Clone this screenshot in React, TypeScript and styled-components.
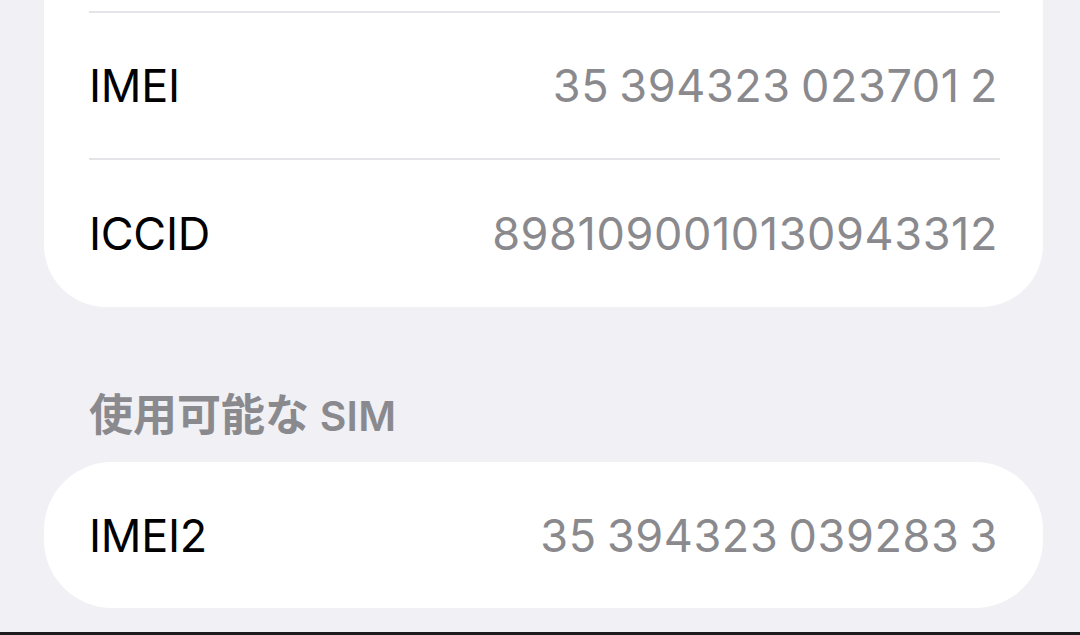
import styled, { createGlobalStyle } from "styled-components";

type InfoRowProps = {
  label?: string;
  value?: string;
  divider?: boolean;
  height?: number;
};

const GlobalStyle = createGlobalStyle`
  html, body {
    margin: 0;
    padding: 0;
    background-color: #f0f0f5;
  }
  body {
    font-family: Inter, "Noto Sans CJK JP", sans-serif;
    -webkit-font-smoothing: antialiased;
  }
`;

const Screen = styled.div`
  width: 1080px;
  height: 635px;
  overflow: hidden;
  box-sizing: border-box;
  border-bottom: 3px solid #1c1c1e;
  background-color: #f0f0f5;
`;

const Content = styled.div`
  display: flex;
  flex-direction: column;
  margin-top: -60px;
  padding: 0 37px 0 44px;
`;

const Card = styled.div<{ $radius?: number }>`
  display: flex;
  flex-direction: column;
  background-color: #ffffff;
  border-radius: ${({ $radius }) => $radius ?? 62}px;
  overflow: hidden;
`;

const Row = styled.div<{ $height: number }>`
  height: ${({ $height }) => $height}px;
  padding: 0 45px;
`;

const RowInner = styled.div<{ $divider: boolean }>`
  height: 100%;
  box-sizing: border-box;
  display: flex;
  flex-direction: row;
  align-items: center;
  justify-content: space-between;
  border-top: ${({ $divider }) => ($divider ? "2px solid #e4e4e9" : "none")};
  margin-right: -2px;
`;

const Label = styled.span`
  font-size: 45px;
  color: #000000;
  letter-spacing: -0.3px;
`;

const Value = styled.span`
  font-size: 45px;
  color: #8a8a8e;
  letter-spacing: 0.6px;
  word-spacing: -3px;
  margin-right: 2px;
`;

const SectionHeader = styled.div`
  font-family: Inter, "Noto Sans CJK JP", sans-serif;
  font-size: 44px;
  font-weight: 600;
  color: #8a8a8e;
  padding: 88px 0 0 45px;
  height: 67px;
  line-height: 40px;
`;

const HeaderLatin = styled.span`
  font-size: 41px;
  letter-spacing: 0.3px;
`;

const InfoRow = ({ label, value, divider = true, height = 147 }: InfoRowProps) => {
  return (
    <Row $height={height}>
      <RowInner $divider={divider}>
        {label ? <Label>{label}</Label> : null}
        {value ? <Value>{value}</Value> : null}
      </RowInner>
    </Row>
  );
};

export default function App() {
  return (
    <Screen>
      <GlobalStyle />
      <Content>
        <Card>
          <InfoRow divider={false} height={71} />
          <InfoRow label="IMEI" value="35 394323 023701 2" height={147} />
          <InfoRow label="ICCID" value="8981090010130943312" height={149} />
        </Card>
        <SectionHeader>
          使用可能な<HeaderLatin> SIM</HeaderLatin>
        </SectionHeader>
        <Card $radius={68}>
          <InfoRow label="IMEI2" value="35 394323 039283 3" divider={false} height={146} />
        </Card>
      </Content>
    </Screen>
  );
}
